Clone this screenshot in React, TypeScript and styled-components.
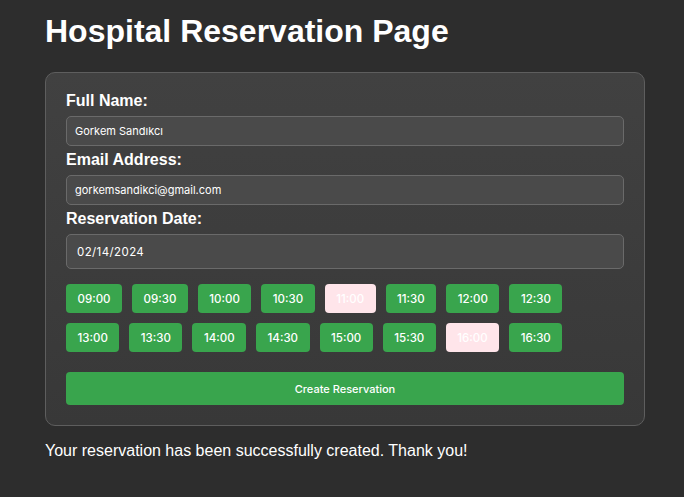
import React from "react";
import styled, { createGlobalStyle } from "styled-components";

const GlobalStyle = createGlobalStyle`
  html, body {
    margin: 0;
    padding: 0;
    background: #2d2d2d;
  }
  body {
    font-family: "Liberation Sans", Arial, sans-serif;
    color: #ffffff;
  }
`;

const Page = styled.div`
  padding: 13px 45px 0 45px;
  min-height: 497px;
  box-sizing: border-box;
`;

const Title = styled.h1`
  margin: 0 0 22px 0;
  font-size: 32px;
  font-weight: 700;
  line-height: 37px;
  color: #ffffff;
`;

const Card = styled.form`
  width: 600px;
  box-sizing: border-box;
  padding: 19px 20px 20px 20px;
  border: 1px solid #5e5e5e;
  border-radius: 10px;
  background: linear-gradient(#414141, #383838);
  display: flex;
  flex-direction: column;
`;

const Label = styled.label`
  display: block;
  font-size: 16px;
  font-weight: 700;
  line-height: 18px;
  margin: 0 0 6px 0;
  color: #ffffff;
`;

const Field = styled.div<{ $tall?: boolean }>`
  height: ${(p) => (p.$tall ? 35 : 30)}px;
  box-sizing: border-box;
  margin-bottom: 5px;
  border: 1px solid #6a6a6a;
  border-radius: 5px;
  background: #4a4a4a;
  display: flex;
  align-items: center;
  font-family: Inter, "Liberation Sans", sans-serif;
  font-size: ${(p) => (p.$tall ? 11.5 : 11)}px;
  letter-spacing: ${(p) => (p.$tall ? 0.4 : 0)}px;
  color: #ffffff;
  padding: 0 8px 0 ${(p) => (p.$tall ? 10 : 8)}px;
`;

const Slots = styled.div`
  display: flex;
  flex-wrap: wrap;
  gap: 10px;
  margin-top: 10px;
  width: 530px;
`;

const Slot = styled.button<{ $booked?: boolean }>`
  height: 29px;
  box-sizing: border-box;
  padding: 0 11.5px;
  border: none;
  border-radius: 4px;
  background: ${(p) => (p.$booked ? "#ffe5ea" : "#39a54d")};
  color: #ffffff;
  font-family: Inter, "Liberation Sans", sans-serif;
  font-size: 11.5px;
  font-weight: 500;
  cursor: pointer;
`;

const Submit = styled.button`
  margin-top: 20px;
  height: 33px;
  border: none;
  border-radius: 4px;
  background: #39a54d;
  color: #ffffff;
  font-family: Inter, "Liberation Sans", sans-serif;
  font-size: 11px;
  font-weight: 500;
  cursor: pointer;
`;

const Message = styled.p`
  margin: 16px 0 0 0;
  font-size: 16px;
  line-height: 18px;
  color: #ffffff;
`;

const slots: { t: string; booked?: boolean }[] = [
  { t: "09:00" },
  { t: "09:30" },
  { t: "10:00" },
  { t: "10:30" },
  { t: "11:00", booked: true },
  { t: "11:30" },
  { t: "12:00" },
  { t: "12:30" },
  { t: "13:00" },
  { t: "13:30" },
  { t: "14:00" },
  { t: "14:30" },
  { t: "15:00" },
  { t: "15:30" },
  { t: "16:00", booked: true },
  { t: "16:30" },
];

export default function App() {
  return (
    <>
      <GlobalStyle />
      <Page>
        <Title>Hospital Reservation Page</Title>
        <Card onSubmit={(e) => e.preventDefault()}>
          <Label>Full Name:</Label>
          <Field>Gorkem Sandıkcı</Field>
          <Label>Email Address:</Label>
          <Field>gorkemsandikci@gmail.com</Field>
          <Label>Reservation Date:</Label>
          <Field $tall>02/14/2024</Field>
          <Slots>
            {slots.map((s) => (
              <Slot key={s.t} type="button" $booked={s.booked}>
                {s.t}
              </Slot>
            ))}
          </Slots>
          <Submit type="submit">Create Reservation</Submit>
        </Card>
        <Message>Your reservation has been successfully created. Thank you!</Message>
      </Page>
    </>
  );
}
